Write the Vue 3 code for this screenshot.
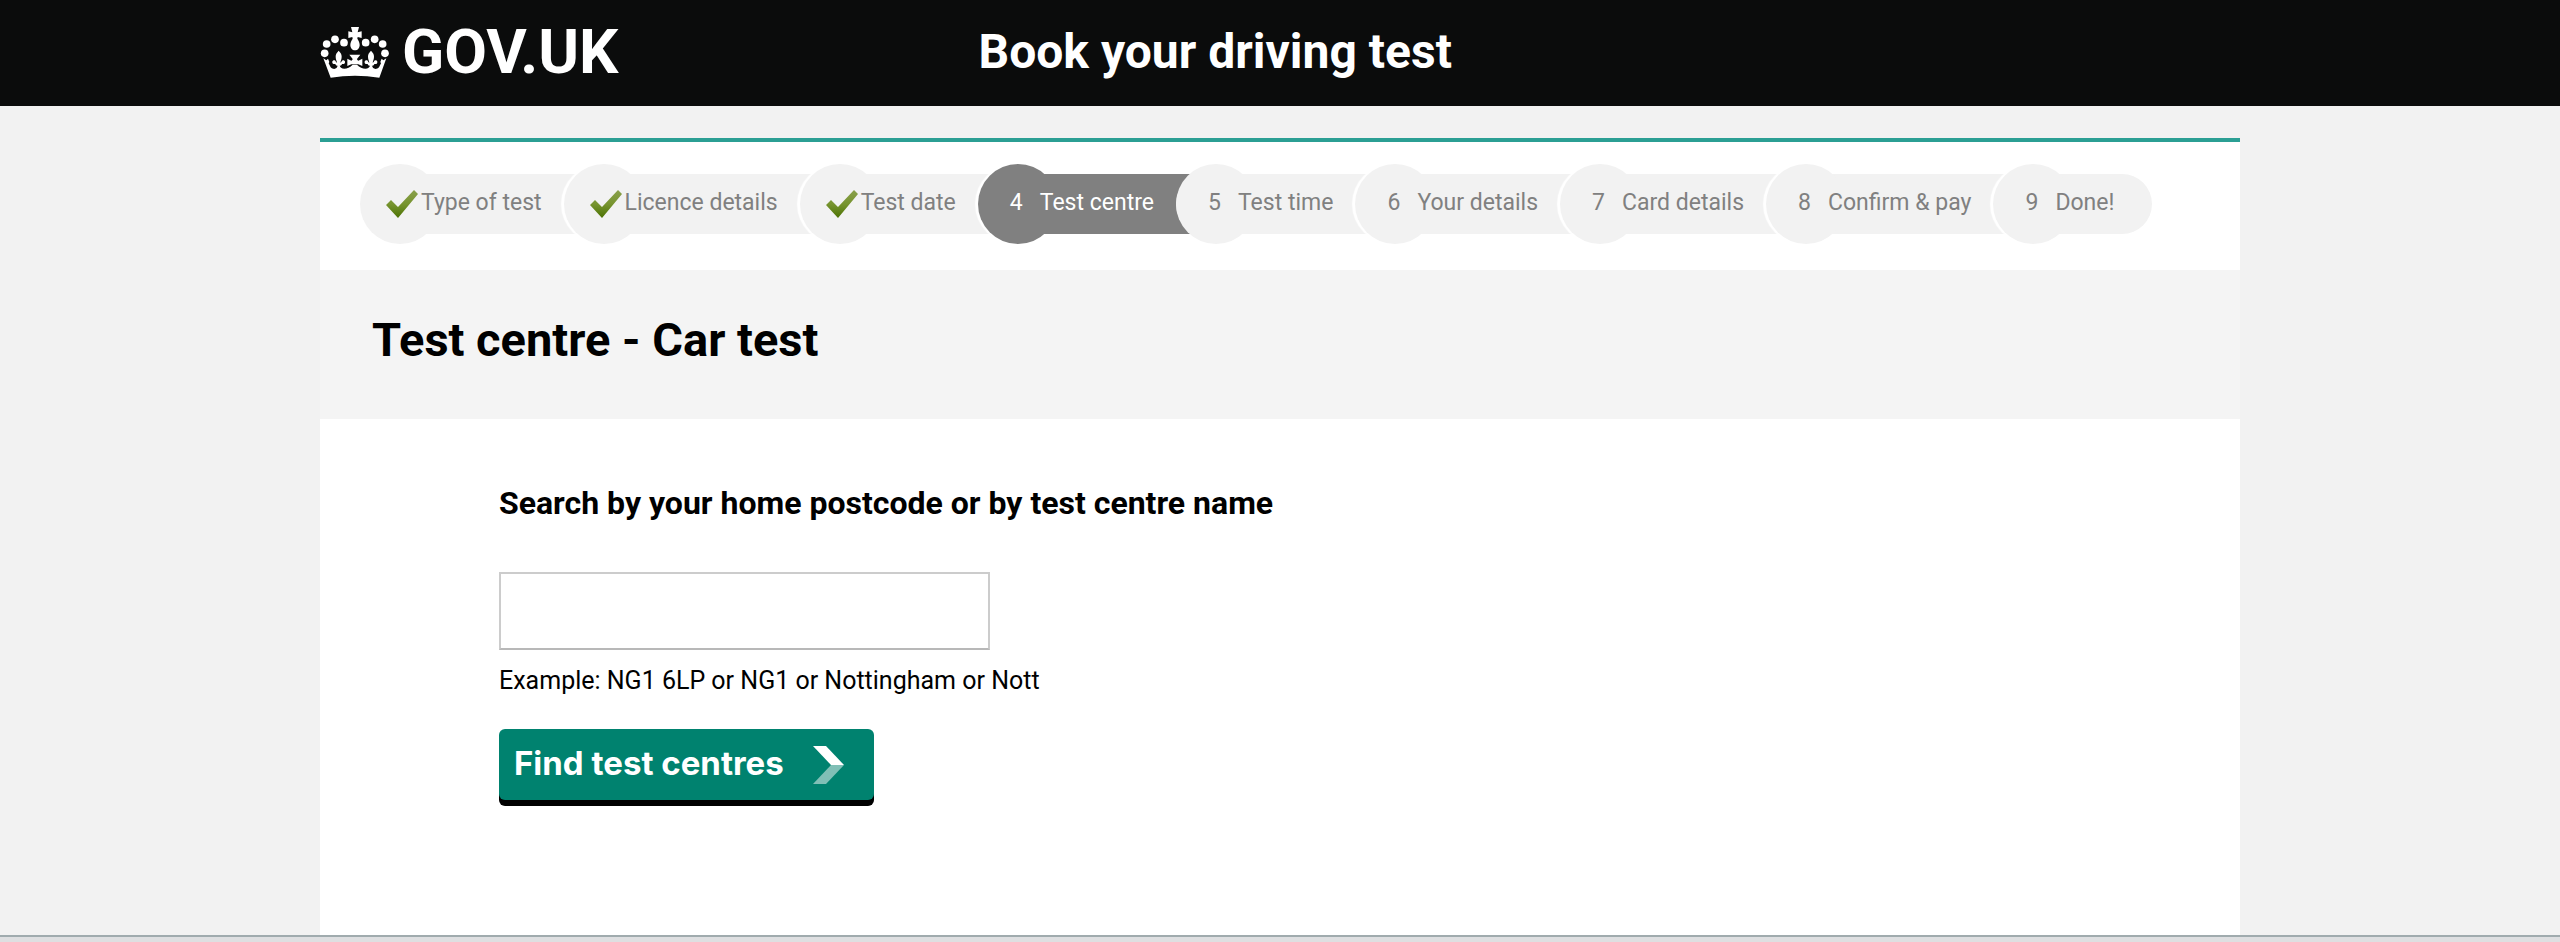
<template>
  <div class="page">
    <header class="header">
      <div class="header-inner">
        <a class="logo" href="#">
          <svg class="crown" viewBox="0 0 210 156" aria-hidden="true">
            <g fill="#fff">
              <circle v-for="(p, i) in pearls" :key="i" :cx="p[0]" :cy="p[1]" r="11.5" />
              <path d="M93 3h24l-4 16 12-3v20l-12-3-1 5c4 6 7 12 7 19 0 9-6 16-14 16s-14-7-14-16c0-7 3-13 7-19l-1-5-12 3V16l12 3z" />
              <!-- band -->
              <path d="M10 97l9 6 5-5 4 10-2 4 6 12c8 8 20 6 21-6h6c1 14 25 14 39-2h13c14 16 38 16 39 2h6c1 12 13 14 21 6l6-12-2-4 4-10 5 5 9-6-21 58c-48-8-98-8-146 0z" />
              <!-- centre cross -->
              <path d="M88 86h33l-10 13c1 3 2 4 4 5l12-6v22l-12-5H94l-12 5V98l12 6c2-1 3-2 4-5z" />
              <!-- fleurs -->
              <path
                v-for="x in [56, 153]"
                :key="x"
                :transform="`translate(${x} 74)`"
                d="M0 0c7 7 9 12 9 18 0 7-3 12-4 18 4 0 3-7 9-7 5 0 7 7 3 10-3 2-6 0-7 1 0 4-5 6-10 6s-10-2-10-6c-1-1-4 1-7-1-4-3-2-10 3-10 6 0 5 7 9 7-1-6-4-11-4-18 0-6 2-11 9-18z"
              />
            </g>
          </svg>
          <span class="logo-text">GOV.UK</span>
        </a>
        <span class="service">Book your driving test</span>
      </div>
    </header>

    <main class="main">
      <ol class="steps">
        <li
          v-for="(step, i) in steps"
          :key="step"
          :class="['step', { done: i < current, active: i === current, next: i === current + 1 }]"
        >
          <svg v-if="i < current" class="tick" viewBox="0 0 32 28" aria-label="Completed">
            <defs>
              <linearGradient :id="`tick-${i}`" x1="0" y1="0" x2="0" y2="1">
                <stop offset="0" stop-color="#8aa04c" />
                <stop offset="0.5" stop-color="#77942f" />
                <stop offset="1" stop-color="#4c7203" />
              </linearGradient>
            </defs>
            <path :fill="`url(#tick-${i})`" d="M0 15l5-5 7 7L28 0l4 4-20 24z" />
          </svg>
          <span v-else class="number">{{ i + 1 }}</span>
          <span class="name">{{ step }}</span>
        </li>
      </ol>

      <div class="title-band">
        <h1>Test centre - Car test</h1>
      </div>

      <form class="search" @submit.prevent>
        <label for="postcode">Search by your home postcode or by test centre name</label>
        <input id="postcode" v-model="query" type="text" aria-describedby="hint" />
        <p id="hint" class="hint">Example: NG1 6LP or NG1 or Nottingham or Nott</p>
        <button type="submit">
          <span>Find test centres</span>
          <svg class="chevron" viewBox="0 0 31 38" aria-hidden="true">
            <path fill="#fff" d="M0 0h13l18 19H18z" />
            <path fill="#80bfb6" d="M18 19h13L13 38H0z" />
          </svg>
        </button>
      </form>
    </main>

    <footer class="footer"></footer>
  </div>
</template>

<script setup>
import { ref } from 'vue'

const query = ref('')
const current = ref(3)

const steps = [
  'Type of test',
  'Licence details',
  'Test date',
  'Test centre',
  'Test time',
  'Your details',
  'Card details',
  'Confirm & pay',
  'Done!'
]

// pearls along the arches of the crown
const pearls = [
  [14, 82], [20, 54], [45, 40], [72, 50],
  [137, 50], [164, 40], [188, 54], [195, 82]
]
</script>

<style>
body {
  margin: 0;
  background: #f2f2f2;
}
</style>

<style scoped>
.page {
  display: flex;
  flex-direction: column;
  min-height: 100vh;
  font-family: Roboto, "Liberation Sans", sans-serif;
  color: #000;
}

.header {
  background: #0b0c0c;
}

.header-inner {
  display: grid;
  grid-template-columns: 34.3% 1fr;
  align-items: center;
  box-sizing: border-box;
  width: 75%;
  height: 106px;
  margin: 0 auto;
  padding-bottom: 3px;
  color: #fff;
  font-weight: bold;
}

.logo {
  display: flex;
  align-items: center;
  gap: 12px;
  color: #fff;
  text-decoration: none;
}

.crown {
  width: 70px;
  height: 52px;
}

.logo-text {
  font-size: 62px;
  line-height: 64px;
}

.service {
  font-size: 48px;
  line-height: 64px;
}

.main {
  flex: 1;
  box-sizing: border-box;
  width: 75%;
  margin: 32px auto 0;
  border-top: 4px solid #2b9f94;
  background: #fff;
}

.steps {
  display: flex;
  margin: 0;
  padding: 32px 40px 36px;
  list-style: none;
  font-size: 23px;
  line-height: 28px;
  color: #808080;
}

.step {
  position: relative;
  isolation: isolate;
  display: flex;
  align-items: center;
  height: 60px;
  margin-right: -40px;
  padding: 0 62px 0 32px;
  border-radius: 30px 0 0 30px;
  background: #f2f2f2;
  white-space: nowrap;
}

.step::before {
  content: "";
  position: absolute;
  z-index: -1;
  top: -10px;
  left: 0;
  width: 80px;
  height: 80px;
  border-radius: 50%;
  background: inherit;
  box-shadow: -3px 0 1px #fff;
}

.step.done {
  padding-left: 26px;
}

.step.active {
  background: #808080;
  color: #fff;
}

.step.next::before {
  box-shadow: none;
}

.step:last-child {
  margin-right: 0;
  padding-right: 38px;
  border-radius: 30px;
}

.number,
.name {
  padding-bottom: 3px;
}

.number {
  width: 30px;
}

.tick {
  width: 32px;
  height: 28px;
  margin-right: 3px;
}

.title-band {
  padding: 38px 52px 47px;
  background: #f4f4f4;
}

h1 {
  margin: 0;
  font-size: 47px;
  line-height: 64px;
}

.search {
  display: flex;
  flex-direction: column;
  align-items: flex-start;
  padding: 64px 179px;
}

label {
  font-size: 32px;
  line-height: 40px;
  font-weight: bold;
}

input {
  box-sizing: border-box;
  width: 491px;
  max-width: 100%;
  height: 78px;
  margin-top: 49px;
  padding: 0 16px;
  border: 2px solid #ccc;
  border-bottom-color: #b8b8b8;
  font: inherit;
  font-size: 32px;
}

.hint {
  margin: 15px 0 32px;
  font-size: 25px;
  line-height: 32px;
}

button {
  display: flex;
  align-items: center;
  gap: 29px;
  height: 71px;
  padding: 0 30px 0 15px;
  border: 0;
  border-radius: 6px;
  background: #00826f;
  box-shadow: 0 6px 0 #000;
  color: #fff;
  font-family: Inter, "Liberation Sans", sans-serif;
  font-size: 33px;
  line-height: 40px;
  font-weight: bold;
  cursor: pointer;
}

button span {
  padding-bottom: 3px;
}

.chevron {
  width: 31px;
  height: 38px;
}

.footer {
  height: 5px;
  border-top: 2px solid #a0abae;
  background: #dedfe1;
}
</style>
